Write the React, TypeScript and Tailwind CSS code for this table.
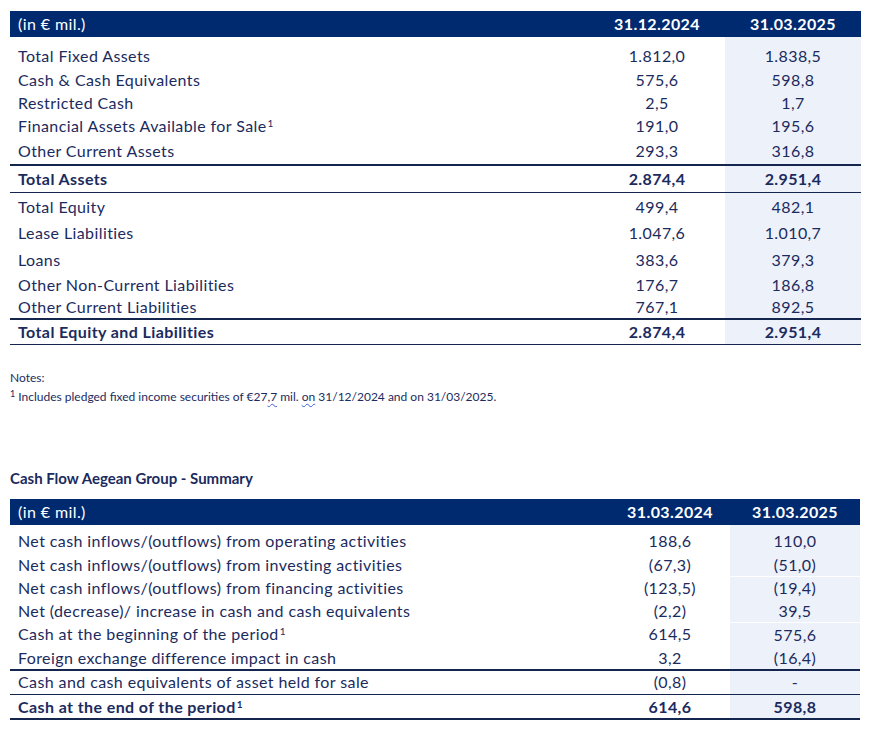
import React from "react";

type Row = { label: React.ReactNode; a: string; b: string; h: number; bold?: boolean; sepB?: boolean };

const FONT = { fontFamily: "Lato, 'Open Sans', sans-serif" };

function Sup() {
  return <span className="text-[10px] relative -top-[5px] ml-[1px]">1</span>;
}

function DataRow({ r, c1, c2 }: { r: Row; c1: string; c2: string }) {
  return (
    <div className={`flex ${r.bold ? "font-bold" : ""}`} style={{ height: r.h }}>
      <div className="flex-1 pl-2 flex items-center">{r.label}</div>
      <div className={`${c1} flex items-center justify-center`}>{r.a}</div>
      <div className={`${c2} flex items-center justify-center bg-[#edf1f9] ${r.sepB ? "border-t border-white" : ""}`}>{r.b}</div>
    </div>
  );
}

function Header({ c1, c2, d1, d2 }: { c1: string; c2: string; d1: string; d2: string }) {
  return (
    <div className="flex h-[26px] bg-[#002a70] text-white items-center">
      <div className="flex-1 pl-2">(in € mil.)</div>
      <div className={`${c1} text-center font-bold`}>{d1}</div>
      <div className={`${c2} text-center font-bold`}>{d2}</div>
    </div>
  );
}

function Block({ rows, pt, c1, c2 }: { rows: Row[]; pt: number; c1: string; c2: string }) {
  return (
    <div className="flex flex-col">
      <div className="flex" style={{ height: pt }}>
        <div className="flex-1" />
        <div className={c1} />
        <div className={`${c2} bg-[#edf1f9]`} />
      </div>
      {rows.map((r, i) => (
        <DataRow key={i} r={r} c1={c1} c2={c2} />
      ))}
    </div>
  );
}

const Line = () => <div className="h-[1.5px] bg-[#14264d]" />;

export default function App() {
  const t1c1 = "w-[136px]";
  const t1c2 = "w-[136px]";
  const t2c1 = "w-[120px]";
  const t2c2 = "w-[130px]";

  const assets: Row[] = [
    { label: "Total Fixed Assets", a: "1.812,0", b: "1.838,5", h: 24 },
    { label: "Cash & Cash Equivalents", a: "575,6", b: "598,8", h: 23 },
    { label: "Restricted Cash", a: "2,5", b: "1,7", h: 23 },
    { label: <span>Financial Assets Available for Sale<Sup /></span>, a: "191,0", b: "195,6", h: 24 },
    { label: "Other Current Assets", a: "293,3", b: "316,8", h: 26 },
  ];
  const liab: Row[] = [
    { label: "Total Equity", a: "499,4", b: "482,1", h: 27 },
    { label: "Lease Liabilities", a: "1.047,6", b: "1.010,7", h: 26 },
    { label: "Loans", a: "383,6", b: "379,3", h: 27 },
    { label: "Other Non-Current Liabilities", a: "176,7", b: "186,8", h: 23 },
    { label: "Other Current Liabilities", a: "767,1", b: "892,5", h: 22 },
  ];
  const cash: Row[] = [
    { label: "Net cash inflows/(outflows) from operating activities", a: "188,6", b: "110,0", h: 24 },
    { label: "Net cash inflows/(outflows) from investing activities", a: "(67,3)", b: "(51,0)", h: 23 },
    { label: "Net cash inflows/(outflows) from financing activities", a: "(123,5)", b: "(19,4)", h: 23, sepB: true },
    { label: "Net (decrease)/ increase in cash and cash equivalents", a: "(2,2)", b: "39,5", h: 23 },
    { label: <span>Cash at the beginning of the period<Sup /></span>, a: "614,5", b: "575,6", h: 24, sepB: true },
    { label: "Foreign exchange difference impact in cash", a: "3,2", b: "(16,4)", h: 23 },
  ];

  return (
    <div className="w-[872px] h-[741px] bg-white text-[#1b2b5e] text-[16px] tracking-[0.4px] leading-none" style={FONT}>
      <div className="pt-[11px] pl-[10px] w-[861px]">
        <Header c1={t1c1} c2={t1c2} d1="31.12.2024" d2="31.03.2025" />
        <Block rows={assets} pt={7} c1={t1c1} c2={t1c2} />
        <Line />
        <DataRow r={{ label: "Total Assets", a: "2.874,4", b: "2.951,4", h: 26, bold: true }} c1={t1c1} c2={t1c2} />
        <Line />
        <Block rows={liab} pt={0} c1={t1c1} c2={t1c2} />
        <Line />
        <DataRow r={{ label: "Total Equity and Liabilities", a: "2.874,4", b: "2.951,4", h: 24, bold: true }} c1={t1c1} c2={t1c2} />
        <Line />
      </div>

      <div className="pl-[10px] pt-[23px] text-[12px] tracking-normal" style={{ fontFamily: "Lato, sans-serif" }}>
        <div className="h-[19px] flex items-center">Notes:</div>
        <div className="h-[19px] flex items-center whitespace-pre">
          <span className="text-[9px] relative -top-[3px] mr-[3px]">1</span>Includes pledged fixed income securities of €27
          <span className="underline decoration-wavy decoration-[#3b5bdb] decoration-1 underline-offset-2">,7</span> mil.{" "}
          <span className="underline decoration-wavy decoration-[#3b5bdb] decoration-1 underline-offset-2">on</span> 31/12/2024 and on 31/03/2025.
        </div>
      </div>

      <div className="pl-[10px] mt-[62px] h-[20px] flex items-center text-[15px] tracking-normal font-bold">Cash Flow Aegean Group - Summary</div>

      <div className="pt-[11px] pl-[10px] w-[860px]">
        <Header c1={t2c1} c2={t2c2} d1="31.03.2024" d2="31.03.2025" />
        <Block rows={cash} pt={4} c1={t2c1} c2={t2c2} />
        <Line />
        <DataRow r={{ label: "Cash and cash equivalents of asset held for sale", a: "(0,8)", b: "-", h: 23 }} c1={t2c1} c2={t2c2} />
        <Line />
        <DataRow r={{ label: <span>Cash at the end of the period<Sup /></span>, a: "614,6", b: "598,8", h: 23, bold: true }} c1={t2c1} c2={t2c2} />
        <Line />
      </div>
    </div>
  );
}
